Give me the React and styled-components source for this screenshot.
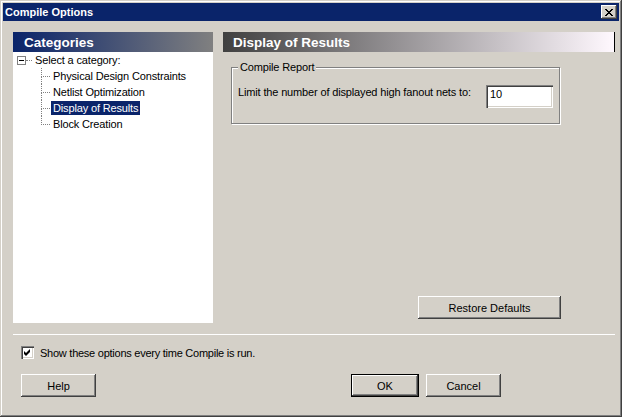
import styled, { createGlobalStyle } from "styled-components";

const GlobalStyle = createGlobalStyle`
  html, body { margin: 0; padding: 0; background: #d4d0c8; }
  body {
    font-family: "Liberation Sans", Arial, sans-serif;
    font-size: 11px;
    color: #000;
  }
`;

const raised = `
  box-shadow: inset -1px -1px #404040, inset 1px 1px #fff,
    inset -2px -2px #808080, inset 2px 2px #d4d0c8;
`;

const Window = styled.div`
  width: 622px;
  height: 417px;
  box-sizing: border-box;
  padding: 3px;
  background: #d4d0c8;
  box-shadow: inset -1px -1px #404040, inset 1px 1px #d4d0c8,
    inset -2px -2px #808080, inset 2px 2px #fff;
  display: flex;
  flex-direction: column;
`;

const TitleBar = styled.div`
  height: 18px;
  background: #0a246a;
  color: #fff;
  display: flex;
  align-items: center;
  padding: 0 2px 0 2px;
  font-weight: bold;
  font-size: 11px;
`;

const CloseButton = styled.div`
  margin-left: auto;
  width: 16px;
  height: 14px;
  background: #d4d0c8;
  ${raised}
  display: flex;
  align-items: center;
  justify-content: center;
`;

const Content = styled.div`
  flex: 1;
  display: flex;
  flex-direction: column;
  padding: 11px 4px 0 10px;
`;

const MainRow = styled.div`
  display: flex;
  gap: 10px;
  height: 291px;
`;

const LeftPanel = styled.div`
  width: 200px;
  display: flex;
  flex-direction: column;
  background: #fff;
`;

const PanelHeader = styled.div`
  height: 20px;
  flex: none;
  display: flex;
  align-items: center;
  padding-left: ${(p) => p.$indent}px;
  color: #fff;
  font-weight: bold;
  font-size: 13.5px;
  background: ${(p) => p.$bg};
  border-right: ${(p) => (p.$edge ? "1px solid #000" : "none")};
`;

const Tree = styled.div`
  display: flex;
  flex-direction: column;
`;

const RootRow = styled.div`
  height: 16px;
  display: flex;
  align-items: center;
  padding-left: 4px;
`;

const Expander = styled.span`
  width: 9px;
  height: 9px;
  box-sizing: border-box;
  border: 1px solid #808080;
  background: #fff;
  display: flex;
  align-items: center;
  justify-content: center;
  &::before {
    content: "";
    width: 5px;
    height: 1px;
    background: #000;
  }
`;

const Dots = styled.span`
  width: 6px;
  border-top: 1px dotted #808080;
  margin-right: 1px;
`;

const ChildRow = styled.div`
  height: 16px;
  display: flex;
  align-items: center;
  padding-left: 28px;
`;

const Connector = styled.span`
  width: 10px;
  height: 16px;
  display: flex;
  flex-direction: column;
`;

const ConnectorTop = styled.span`
  height: 9px;
  box-sizing: border-box;
  width: 9px;
  border-left: 1px dotted #808080;
  border-bottom: 1px dotted #808080;
`;

const ConnectorBottom = styled.span`
  height: 7px;
  border-left: ${(p) => (p.$last ? "none" : "1px dotted #808080")};
`;

const Item = styled.span`
  height: 14px;
  line-height: 14px;
  padding: 0 2px;
  background: ${(p) => (p.$selected ? "#0a246a" : "transparent")};
  color: ${(p) => (p.$selected ? "#fff" : "#000")};
  letter-spacing: -0.15px;
`;

const RightPanel = styled.div`
  flex: 1;
  display: flex;
  flex-direction: column;
`;

const RightBody = styled.div`
  flex: 1;
  width: 330px;
  margin-left: 8px;
  display: flex;
  flex-direction: column;
`;

const GroupBox = styled.fieldset`
  margin: 9px 0 0 0;
  width: 329px;
  box-sizing: border-box;
  padding: 0;
  border: 1px solid #808080;
  box-shadow: inset 1px 1px #fff, 1px 1px #fff;
  min-inline-size: 0;
`;

const Legend = styled.legend`
  margin-left: 6px;
  padding: 0 2px;
  line-height: 13px;
  background: #d4d0c8;
  letter-spacing: -0.15px;
`;

const FieldRow = styled.div`
  display: flex;
  align-items: flex-start;
  padding: 0 6px;
  margin: 11px 0 15px;
`;

const FieldLabel = styled.span`
  padding-top: 1px;
  line-height: 13px;
  letter-spacing: -0.15px;
`;

const NumberInput = styled.input`
  margin-left: auto;
  width: 67px;
  height: 23px;
  box-sizing: border-box;
  border: none;
  outline: none;
  background: #fff;
  padding: 2px 4px 8px;
  font-family: "Liberation Sans", Arial, sans-serif;
  font-size: 11px;
  box-shadow: inset 1px 1px #808080, inset 2px 2px #404040,
    inset -1px -1px #fff, inset -2px -2px #d4d0c8;
`;

const Button = styled.button`
  width: ${(p) => p.$w}px;
  height: 23px;
  flex: none;
  border: none;
  padding: 0;
  background: #d4d0c8;
  font-family: "Liberation Sans", Arial, sans-serif;
  font-size: 11px;
  color: #000;
  ${(p) =>
    p.$default
      ? `box-shadow: inset 0 0 0 1px #000, inset -2px -2px #404040,
          inset 2px 2px #fff, inset -3px -3px #808080;`
      : raised}
`;

const RestoreButton = styled(Button)`
  margin-top: auto;
  margin-bottom: 4px;
  align-self: flex-end;
`;

const Separator = styled.div`
  margin-top: 11px;
  height: 1px;
  background: #fff;
`;

const CheckRow = styled.label`
  margin-top: 11px;
  padding-left: 8px;
  display: flex;
  align-items: center;
  gap: 6px;
  letter-spacing: -0.25px;
`;

const CheckBox = styled.span`
  width: 13px;
  height: 13px;
  box-sizing: border-box;
  background: #fff;
  box-shadow: inset 1px 1px #808080, inset 2px 2px #404040,
    inset -1px -1px #fff, inset -2px -2px #d4d0c8;
  display: flex;
  align-items: center;
  justify-content: center;
`;

const ButtonRow = styled.div`
  margin-top: 15px;
  padding: 0 114px 0 8px;
  display: flex;
  gap: 7px;
`;

const Spacer = styled.div`
  flex: 1;
`;

const categories = [
  "Physical Design Constraints",
  "Netlist Optimization",
  "Display of Results",
  "Block Creation",
];

const App = () => {
  return (
    <>
      <GlobalStyle />
      <Window>
        <TitleBar>
          Compile Options
          <CloseButton>
            <svg width="8" height="7" viewBox="0 0 8 7">
              <path
                fill="#000"
                d="M0 0h2v1H0zM6 0h2v1H6zM1 1h2v1H1zM5 1h2v1H5zM2 2h4v1H2zM3 3h2v1H3zM2 4h4v1H2zM1 5h2v1H1zM5 5h2v1H5zM0 6h2v1H0zM6 6h2v1H6z"
              />
            </svg>
          </CloseButton>
        </TitleBar>
        <Content>
          <MainRow>
            <LeftPanel>
              <PanelHeader $indent={11} $bg="linear-gradient(to right, #0a246a, #808080)">
                Categories
              </PanelHeader>
              <Tree>
                <RootRow>
                  <Expander />
                  <Dots />
                  <Item>Select a category:</Item>
                </RootRow>
                {categories.map((c, i) => (
                  <ChildRow key={c}>
                    <Connector>
                      <ConnectorTop />
                      <ConnectorBottom $last={i === categories.length - 1} />
                    </Connector>
                    <Item $selected={c === "Display of Results"}>{c}</Item>
                  </ChildRow>
                ))}
              </Tree>
            </LeftPanel>
            <RightPanel>
              <PanelHeader $indent={10} $edge $bg="linear-gradient(to right, #404040, #fff8fe)">
                Display of Results
              </PanelHeader>
              <RightBody>
                <GroupBox>
                  <Legend>Compile Report</Legend>
                  <FieldRow>
                    <FieldLabel>Limit the number of displayed high fanout nets to:</FieldLabel>
                    <NumberInput defaultValue="10" />
                  </FieldRow>
                </GroupBox>
                <RestoreButton $w={143}>Restore Defaults</RestoreButton>
              </RightBody>
            </RightPanel>
          </MainRow>
          <Separator />
          <CheckRow>
            <CheckBox>
              <svg width="7" height="7" viewBox="0 0 7 7">
                <path fill="#000" d="M6 0v3L2 7 0 5V2l2 2z" />
              </svg>
            </CheckBox>
            Show these options every time Compile is run.
          </CheckRow>
          <ButtonRow>
            <Button $w={75}>Help</Button>
            <Spacer />
            <Button $w={68} $default>OK</Button>
            <Button $w={75}>Cancel</Button>
          </ButtonRow>
        </Content>
      </Window>
    </>
  );
};

export default App;
